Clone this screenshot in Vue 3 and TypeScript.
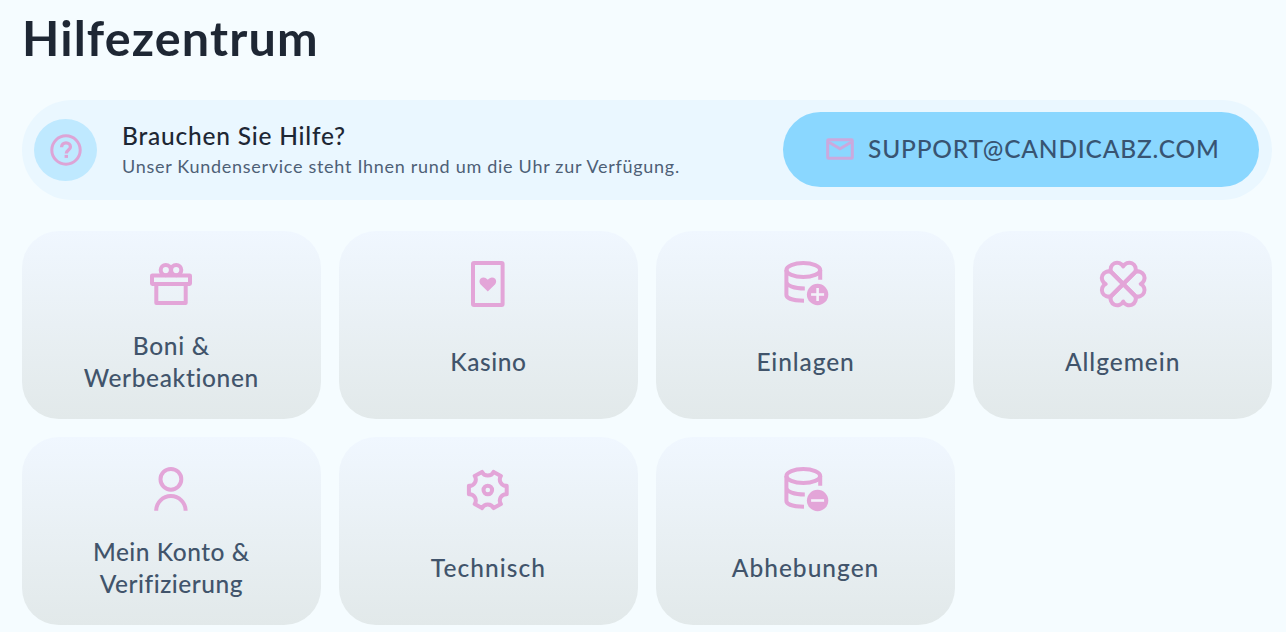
<script setup lang="ts">
type IconName = 'gift' | 'card' | 'deposit' | 'clover' | 'person' | 'gear' | 'withdraw'

interface Topic {
  icon: IconName
  lines: string[]
  tracking: number
}

const topics: Topic[] = [
  { icon: 'gift', lines: ['Boni &', 'Werbeaktionen'], tracking: 0.65 },
  { icon: 'card', lines: ['Kasino'], tracking: 0.6 },
  { icon: 'deposit', lines: ['Einlagen'], tracking: 0.9 },
  { icon: 'clover', lines: ['Allgemein'], tracking: 0.95 },
  { icon: 'person', lines: ['Mein Konto &', 'Verifizierung'], tracking: 0.52 },
  { icon: 'gear', lines: ['Technisch'], tracking: 1.05 },
  { icon: 'withdraw', lines: ['Abhebungen'], tracking: 1 },
]
</script>

<template>
  <main class="page">
    <h1 class="title">Hilfezentrum</h1>

    <section class="support">
      <div class="badge">
        <svg viewBox="0 0 32 32" class="badge-icon">
          <circle cx="16" cy="16" r="14.2" />
          <path class="mark" d="M11.6 13.2c0-2.7 1.9-4.3 4.4-4.3s4.4 1.6 4.4 4c0 3.1-4.1 3.3-4.1 6.6" />
          <rect x="14.6" y="20.9" width="3.4" height="3" class="solid" />
        </svg>
      </div>
      <div class="support-text">
        <div class="support-title">Brauchen Sie Hilfe?</div>
        <div class="support-sub">Unser Kundenservice steht Ihnen rund um die Uhr zur Verfügung.</div>
      </div>
      <a class="mail">
        <svg viewBox="0 0 28 22" class="mail-icon">
          <rect x="1.7" y="1.7" width="24.6" height="18.6" rx="0.8" />
          <path d="M3 4.2l11 6.6 11-6.6" />
        </svg>
        <span class="mail-text">SUPPORT@CANDICABZ.COM</span>
      </a>
    </section>

    <section class="grid">
      <a v-for="t in topics" :key="t.icon" class="tile">
        <svg viewBox="0 0 56 56" class="icon">
          <g v-if="t.icon === 'gift'">
            <circle cx="22.8" cy="14.1" r="5.1" />
            <circle cx="33.2" cy="14.1" r="5.1" />
            <rect x="9" y="19.4" width="38" height="8.6" rx="0.4" />
            <path d="M13.3 28v19h29.4V28" />
          </g>
          <g v-else-if="t.icon === 'card'">
            <rect x="13" y="7" width="29.6" height="42" rx="1" />
            <path class="solid" d="M27.8 35.6L20.4 28.2a4.7 4.7 0 0 1 0-5.4 4.6 4.6 0 0 1 6.6.2l.8.8.8-.8a4.6 4.6 0 0 1 6.6-.2 4.7 4.7 0 0 1 0 5.4z" />
          </g>
          <g v-else-if="t.icon === 'deposit' || t.icon === 'withdraw'">
            <ellipse cx="25.3" cy="14" rx="16.9" ry="7" />
            <path d="M8.4 14v25c0 3 6.2 5.6 17.6 5.8M8.4 25.5c0 4.2 8 7 18.4 7M42.2 14v9.8" />
            <circle cx="39.6" cy="38.5" r="10.7" class="solid" />
            <path class="sign" d="M33.1 38.5h13" />
            <path v-if="t.icon === 'deposit'" class="sign" d="M39.6 32v13" />
          </g>
          <g v-else-if="t.icon === 'clover'" transform="translate(28.2 28)">
            <path
              v-for="a in [0, 90, 180, 270]"
              :key="a"
              :transform="`rotate(${a})`"
              d="M0 0L-12-12A6.6 6.6 0 0 1 0-17.5 6.6 6.6 0 0 1 12-12z"
            />
          </g>
          <g v-else-if="t.icon === 'person'">
            <circle cx="27.9" cy="17.3" r="10.4" />
            <path d="M13.2 48.8a14.7 14.7 0 0 1 29.4 0" />
          </g>
          <g v-else transform="translate(27.8 28)">
            <circle r="4.3" />
            <path d="M18.9-4.2V4.2A6.4 6.4 0 0 0 13.1 14.1L5.8 18.1A6.4 6.4 0 0 0-5.8 18.1L-13.1 14.1A6.4 6.4 0 0 0-18.9 4.2V-4.2A6.4 6.4 0 0 0-13.1-14.1L-5.8-18.1A6.4 6.4 0 0 0 5.8-18.1L13.1-14.1A6.4 6.4 0 0 0 18.9-4.2z" />
          </g>
        </svg>
        <div class="label" :style="{ letterSpacing: t.tracking + 'px' }">
          <span v-for="l in t.lines" :key="l">{{ l }}</span>
        </div>
      </a>
    </section>
  </main>
</template>

<style>
html,
body {
  background: #f5fcff;
}
</style>

<style scoped>
.page {
  box-sizing: border-box;
  height: 632px;
  overflow: hidden;
  padding: 7px 14px 0 22px;
  font-family: Lato, "Open Sans", sans-serif;
  background: #f5fcff;
}

.title {
  margin: 0;
  height: 60px;
  font-size: 48.5px;
  line-height: 60px;
  font-weight: 700;
  letter-spacing: 1.15px;
  color: #1e2734;
}

.support {
  box-sizing: border-box;
  display: flex;
  align-items: center;
  height: 100px;
  margin-top: 33px;
  padding: 0 13px 0 12px;
  border-radius: 50px;
  background: #eaf7ff;
}

.badge {
  display: flex;
  align-items: center;
  justify-content: center;
  width: 63px;
  height: 62px;
  border-radius: 50%;
  background: #bfe9ff;
}

.badge-icon {
  width: 32px;
  height: 32px;
  fill: none;
  stroke: #dda4d6;
  stroke-width: 3;
}

.badge-icon .mark {
  stroke-width: 3.3;
}

.badge-icon .solid {
  fill: #dda4d6;
  stroke: none;
}

.support-text {
  flex: 1;
  margin-left: 25px;
  padding-bottom: 2px;
  white-space: nowrap;
}

.support-title {
  height: 33px;
  line-height: 33px;
  font-size: 24.5px;
  font-weight: 500;
  letter-spacing: 0.78px;
  color: #1e2734;
}

.support-sub {
  height: 28px;
  line-height: 28px;
  font-size: 18px;
  letter-spacing: 0.71px;
  color: #4e6076;
}

.mail {
  box-sizing: border-box;
  display: flex;
  align-items: center;
  width: 476px;
  height: 75px;
  margin-bottom: 2px;
  padding-left: 43px;
  border-radius: 38px;
  background: #8ad7ff;
}

.mail-icon {
  width: 28px;
  height: 22px;
  fill: none;
  stroke: #cba9dd;
  stroke-width: 3;
}

.mail-text {
  margin-left: 14px;
  padding-bottom: 1px;
  font-size: 24.5px;
  font-weight: 500;
  letter-spacing: 0.82px;
  color: #385472;
}

.grid {
  display: grid;
  grid-template-columns: repeat(4, 1fr);
  grid-auto-rows: 188px;
  gap: 18px 18.4px;
  margin-top: 31px;
}

.tile {
  display: flex;
  flex-direction: column;
  align-items: center;
  padding-top: 25px;
  box-sizing: border-box;
  border-radius: 37px;
  background: linear-gradient(180deg, #f0f7ff 0%, #e9f0f4 50%, #e2e9ea 100%);
}

.icon {
  flex: none;
  width: 56px;
  height: 56px;
  fill: none;
  stroke: #e3a5d8;
  stroke-width: 4;
  stroke-linejoin: round;
}

.icon .solid {
  fill: #e3a5d8;
  stroke: none;
}

.icon .sign {
  stroke: #f3f1fa;
  stroke-width: 2.6;
}

.label {
  display: flex;
  flex-direction: column;
  align-items: center;
  justify-content: center;
  height: 66px;
  margin-top: 17px;
  font-size: 24.5px;
  line-height: 32.5px;
  font-weight: 500;
  color: #41546b;
}
</style>
